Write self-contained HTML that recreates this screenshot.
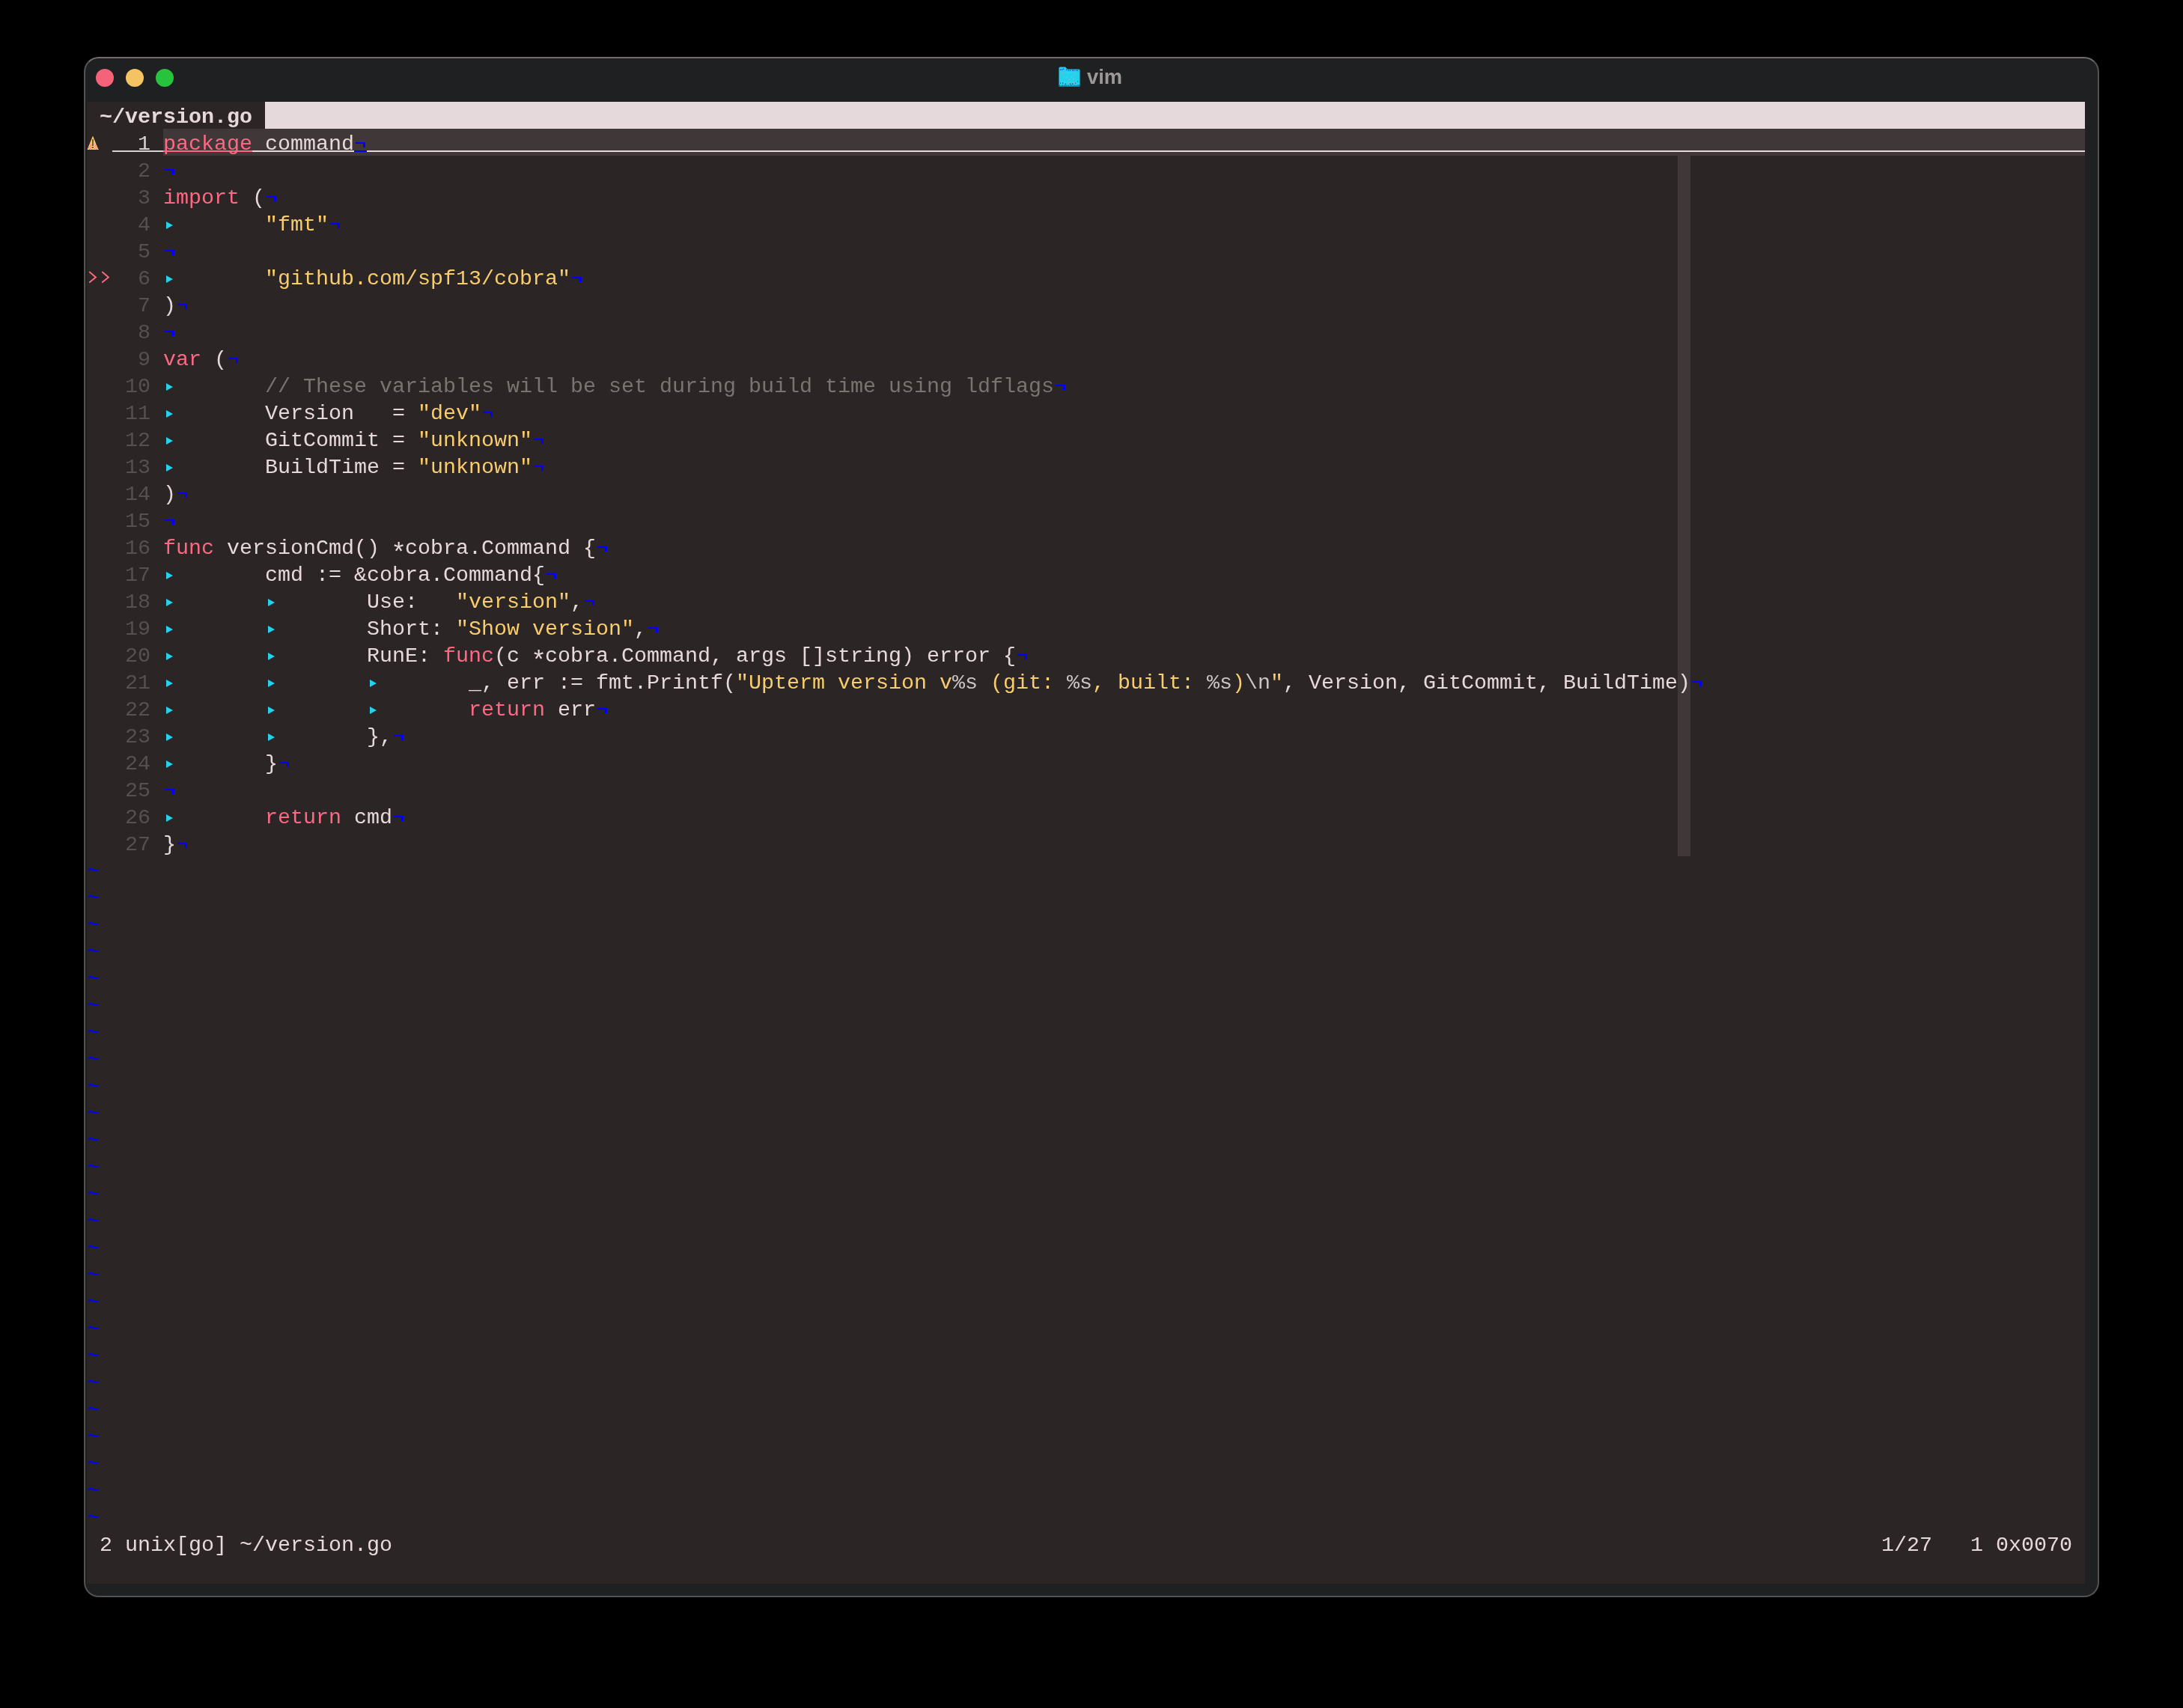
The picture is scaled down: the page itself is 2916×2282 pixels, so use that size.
<!DOCTYPE html>
<html><head><meta charset="utf-8"><title>vim</title><style>
html,body{margin:0;padding:0;background:#000;width:2916px;height:2282px;overflow:hidden;}
#win{position:absolute;left:112px;top:76px;width:2692px;height:2058px;box-sizing:border-box;border:2px solid #545351;border-top-color:#726c6a;border-radius:20px;background:#1f2022;}
.tl-btn{position:absolute;width:24px;height:24px;border-radius:50%;top:92px;}
#title{position:absolute;left:1452px;will-change:transform;top:88px;font-family:"Liberation Sans",sans-serif;font-weight:bold;font-size:27.3px;line-height:30px;color:#9d9898;}
#folder{position:absolute;left:1414px;top:88.5px;width:29px;height:27px;}
#term{position:absolute;left:116px;top:136px;width:2669px;height:1980px;background:#2c2525;font-family:"Liberation Mono",monospace;font-size:28.333px;line-height:36px;color:#e6d9db;overflow:hidden;will-change:transform;}
.r{position:absolute;left:0;height:36px;width:2669px;white-space:pre;}
.r b{font-weight:normal;}
.tlbg{position:absolute;height:36px;background:#e5d9db;}
.r b.tsel{color:#e6d9db;font-weight:bold;}
.cl{position:absolute;height:36px;background:#403838;}
.cc{position:absolute;width:17px;background:#403838;}
.ul{position:absolute;height:2px;}
.k{color:#fd6883;}
.s{color:#f9cc6c;}
.c{color:#7a7471;}
.x{color:#c9c5c3;}
.ln{color:#575050;}
.lnc{color:#d6d1d1;}
.nt{color:#0000ff;}
i{display:inline-block;width:17px;height:36px;vertical-align:top;position:relative;}
.nl::before{content:"";position:absolute;left:2px;top:15px;width:10px;height:5px;border-top:2px solid #0000ff;border-right:3px solid #0000ff;}
.tb::before{content:"";position:absolute;left:4px;top:13px;width:0;height:0;border-left:9px solid #22d3ee;border-top:5px solid transparent;border-bottom:5px solid transparent;}
.warn{width:34px;}
.sg{width:34px;}
.sg svg{position:absolute;left:0;top:-3px;}
.r b.st{display:inline-block;transform:translateY(8px) scale(1.22);}
.warn svg{position:absolute;left:-0.5px;top:6px;}
</style></head>
<body>
<div id="win"></div>
<div class="tl-btn" style="left:128px;background:#f5637a"></div>
<div class="tl-btn" style="left:168px;background:#f5c462"></div>
<div class="tl-btn" style="left:208px;background:#28c33d"></div>
<svg id="folder" viewBox="0 0 29 27"><path d="M0.5,2 Q0.5,0.5 2,0.5 L9,0.5 L12,3.5 L27,3.5 Q28.5,3.5 28.5,5 L28.5,26.5 L0.5,26.5 Z" fill="#22d3ee"/><rect x="1.9" y="3.5" width="1.2" height="1.2" fill="#1020d8"/><rect x="4.0" y="3.5" width="1.2" height="1.2" fill="#1020d8"/><rect x="6.0" y="2.5" width="1.2" height="1.2" fill="#1020d8"/><rect x="10.2" y="3.5" width="1.2" height="1.2" fill="#1020d8"/><rect x="12.9" y="4.5" width="1.2" height="1.2" fill="#1020d8"/><rect x="15.0" y="4.5" width="1.2" height="1.2" fill="#1020d8"/><rect x="18.1" y="4.5" width="1.2" height="1.2" fill="#1020d8"/><rect x="20.1" y="4.5" width="1.2" height="1.2" fill="#1020d8"/><rect x="23.2" y="4.5" width="1.2" height="1.2" fill="#1020d8"/><rect x="25.0" y="4.5" width="1.2" height="1.2" fill="#1020d8"/><rect x="25.0" y="19.3" width="1.2" height="1.2" fill="#1020d8"/><rect x="1.9" y="21.4" width="1.2" height="1.2" fill="#1020d8"/><rect x="5.0" y="21.4" width="1.2" height="1.2" fill="#1020d8"/><rect x="22.2" y="21.4" width="1.2" height="1.2" fill="#1020d8"/><rect x="8.8" y="22.4" width="1.2" height="1.2" fill="#1020d8"/><rect x="15.0" y="22.4" width="1.2" height="1.2" fill="#1020d8"/><rect x="18.1" y="22.4" width="1.2" height="1.2" fill="#1020d8"/><rect x="0.9" y="24.5" width="1.2" height="1.2" fill="#1020d8"/><rect x="3.0" y="24.5" width="1.2" height="1.2" fill="#1020d8"/><rect x="5.0" y="24.5" width="1.2" height="1.2" fill="#1020d8"/><rect x="7.1" y="24.5" width="1.2" height="1.2" fill="#1020d8"/><rect x="9.1" y="24.5" width="1.2" height="1.2" fill="#1020d8"/><rect x="10.9" y="24.5" width="1.2" height="1.2" fill="#1020d8"/><rect x="12.9" y="24.5" width="1.2" height="1.2" fill="#1020d8"/><rect x="15.0" y="24.5" width="1.2" height="1.2" fill="#1020d8"/><rect x="17.0" y="24.5" width="1.2" height="1.2" fill="#1020d8"/><rect x="19.1" y="24.5" width="1.2" height="1.2" fill="#1020d8"/><rect x="21.2" y="24.5" width="1.2" height="1.2" fill="#1020d8"/><rect x="23.2" y="24.5" width="1.2" height="1.2" fill="#1020d8"/><rect x="25.3" y="24.5" width="1.2" height="1.2" fill="#1020d8"/><rect x="27.0" y="24.5" width="1.2" height="1.2" fill="#1020d8"/><rect x="4.0" y="7.5" width="1.1" height="1.1" fill="#b8b0ae"/><rect x="6.7" y="7.5" width="1.1" height="1.1" fill="#b8b0ae"/><rect x="9.1" y="7.5" width="1.1" height="1.1" fill="#b8b0ae"/><rect x="10.9" y="7.5" width="1.1" height="1.1" fill="#b8b0ae"/><rect x="12.9" y="7.5" width="1.1" height="1.1" fill="#b8b0ae"/><rect x="15.0" y="7.5" width="1.1" height="1.1" fill="#b8b0ae"/><rect x="17.0" y="7.5" width="1.1" height="1.1" fill="#b8b0ae"/><rect x="19.1" y="7.5" width="1.1" height="1.1" fill="#b8b0ae"/><rect x="21.2" y="7.5" width="1.1" height="1.1" fill="#b8b0ae"/><rect x="22.9" y="8.4" width="1.1" height="1.1" fill="#b8b0ae"/><rect x="6.0" y="10.4" width="1.1" height="1.1" fill="#b8b0ae"/><rect x="20.1" y="11.4" width="1.1" height="1.1" fill="#b8b0ae"/><rect x="7.1" y="13.5" width="1.1" height="1.1" fill="#b8b0ae"/><rect x="10.9" y="13.5" width="1.1" height="1.1" fill="#b8b0ae"/><rect x="17.0" y="13.5" width="1.1" height="1.1" fill="#b8b0ae"/><rect x="19.1" y="15.5" width="1.1" height="1.1" fill="#b8b0ae"/><rect x="14.0" y="16.6" width="1.1" height="1.1" fill="#b8b0ae"/><rect x="3.0" y="20.7" width="1.1" height="1.1" fill="#b8b0ae"/><rect x="7.1" y="20.7" width="1.1" height="1.1" fill="#b8b0ae"/><rect x="8.8" y="20.7" width="1.1" height="1.1" fill="#b8b0ae"/><rect x="12.2" y="20.7" width="1.1" height="1.1" fill="#b8b0ae"/><rect x="15.0" y="20.7" width="1.1" height="1.1" fill="#b8b0ae"/><rect x="18.1" y="20.7" width="1.1" height="1.1" fill="#b8b0ae"/><rect x="20.1" y="20.7" width="1.1" height="1.1" fill="#b8b0ae"/><rect x="22.9" y="20.7" width="1.1" height="1.1" fill="#b8b0ae"/><rect x="3.0" y="23.4" width="1.1" height="1.1" fill="#b8b0ae"/><rect x="6.0" y="23.4" width="1.1" height="1.1" fill="#b8b0ae"/><rect x="11.2" y="23.4" width="1.1" height="1.1" fill="#b8b0ae"/><rect x="14.0" y="23.4" width="1.1" height="1.1" fill="#b8b0ae"/><rect x="20.1" y="23.4" width="1.1" height="1.1" fill="#b8b0ae"/><rect x="23.2" y="23.4" width="1.1" height="1.1" fill="#b8b0ae"/></svg>
<div id="title">vim</div>
<div id="term">
<div class="tlbg" style="top:0;left:238px;width:2431px"></div>
<div class="r" style="top:3px"><b class="tsel"> ~/version.go </b></div>
<div class="cl" style="top:36px;left:102px;width:2567px"></div>
<div class="cc" style="top:72px;left:2125px;height:936px"></div>
<div class="r" style="top:39px"><i class="warn"><svg width="16" height="20" viewBox="0 0 16 20"><polygon points="8,0.5 15.5,19 0.5,19" fill="#f9cc6c"/><rect x="4" y="11" width="1" height="1" fill="#fd6883"/><rect x="10" y="11" width="1" height="1" fill="#fd6883"/><rect x="6" y="12" width="1" height="1" fill="#fd6883"/><rect x="12" y="12" width="1" height="1" fill="#fd6883"/><rect x="5" y="13" width="1" height="1" fill="#fd6883"/><rect x="11" y="13" width="1" height="1" fill="#fd6883"/><rect x="4" y="14" width="1" height="1" fill="#fd6883"/><rect x="10" y="14" width="1" height="1" fill="#fd6883"/><rect x="13" y="14" width="1" height="1" fill="#fd6883"/><rect x="3" y="15" width="1" height="1" fill="#fd6883"/><rect x="6" y="15" width="1" height="1" fill="#fd6883"/><rect x="12" y="15" width="1" height="1" fill="#fd6883"/><rect x="2" y="16" width="1" height="1" fill="#fd6883"/><rect x="5" y="16" width="1" height="1" fill="#fd6883"/><rect x="11" y="16" width="1" height="1" fill="#fd6883"/><rect x="14" y="16" width="1" height="1" fill="#fd6883"/><rect x="4" y="17" width="1" height="1" fill="#fd6883"/><rect x="10" y="17" width="1" height="1" fill="#fd6883"/><rect x="13" y="17" width="1" height="1" fill="#fd6883"/><rect x="3" y="18" width="1" height="1" fill="#fd6883"/><rect x="6" y="18" width="1" height="1" fill="#fd6883"/><rect x="12" y="18" width="1" height="1" fill="#fd6883"/><rect x="15" y="18" width="1" height="1" fill="#fd6883"/><rect x="7" y="5" width="2" height="9" fill="#7a5a3a"/><rect x="7" y="15" width="2" height="2" fill="#7a5a3a"/></svg></i><b class="lnc">  1 </b><b class="k">package</b> command<i class="nl"></i></div>
<div class="r" style="top:75px">  <b class="ln">  2 </b><i class="nl"></i></div>
<div class="r" style="top:111px">  <b class="ln">  3 </b><b class="k">import</b> (<i class="nl"></i></div>
<div class="r" style="top:147px">  <b class="ln">  4 </b><i class="tb"></i>       <b class="s">&quot;fmt&quot;</b><i class="nl"></i></div>
<div class="r" style="top:183px">  <b class="ln">  5 </b><i class="nl"></i></div>
<div class="r" style="top:219px"><i class="sg"><svg width="34" height="36" viewBox="0 0 34 36"><path d="M3.8,11.6 L11.9,18.4 L3.8,25.1 M20.8,11.6 L28.9,18.4 L20.8,25.1" fill="none" stroke="#fd6883" stroke-width="1.9" stroke-linecap="round" stroke-linejoin="miter"/></svg></i><b class="ln">  6 </b><i class="tb"></i>       <b class="s">&quot;github.com/spf13/cobra&quot;</b><i class="nl"></i></div>
<div class="r" style="top:255px">  <b class="ln">  7 </b>)<i class="nl"></i></div>
<div class="r" style="top:291px">  <b class="ln">  8 </b><i class="nl"></i></div>
<div class="r" style="top:327px">  <b class="ln">  9 </b><b class="k">var</b> (<i class="nl"></i></div>
<div class="r" style="top:363px">  <b class="ln"> 10 </b><i class="tb"></i>       <b class="c">// These variables will be set during build time using ldflags</b><i class="nl"></i></div>
<div class="r" style="top:399px">  <b class="ln"> 11 </b><i class="tb"></i>       Version   = <b class="s">&quot;dev&quot;</b><i class="nl"></i></div>
<div class="r" style="top:435px">  <b class="ln"> 12 </b><i class="tb"></i>       GitCommit = <b class="s">&quot;unknown&quot;</b><i class="nl"></i></div>
<div class="r" style="top:471px">  <b class="ln"> 13 </b><i class="tb"></i>       BuildTime = <b class="s">&quot;unknown&quot;</b><i class="nl"></i></div>
<div class="r" style="top:507px">  <b class="ln"> 14 </b>)<i class="nl"></i></div>
<div class="r" style="top:543px">  <b class="ln"> 15 </b><i class="nl"></i></div>
<div class="r" style="top:579px">  <b class="ln"> 16 </b><b class="k">func</b> versionCmd() <b class="st">*</b>cobra.Command {<i class="nl"></i></div>
<div class="r" style="top:615px">  <b class="ln"> 17 </b><i class="tb"></i>       cmd := &amp;cobra.Command{<i class="nl"></i></div>
<div class="r" style="top:651px">  <b class="ln"> 18 </b><i class="tb"></i>       <i class="tb"></i>       Use:   <b class="s">&quot;version&quot;</b>,<i class="nl"></i></div>
<div class="r" style="top:687px">  <b class="ln"> 19 </b><i class="tb"></i>       <i class="tb"></i>       Short: <b class="s">&quot;Show version&quot;</b>,<i class="nl"></i></div>
<div class="r" style="top:723px">  <b class="ln"> 20 </b><i class="tb"></i>       <i class="tb"></i>       RunE: <b class="k">func</b>(c <b class="st">*</b>cobra.Command, args []string) error {<i class="nl"></i></div>
<div class="r" style="top:759px">  <b class="ln"> 21 </b><i class="tb"></i>       <i class="tb"></i>       <i class="tb"></i>       _, err := fmt.Printf(<b class="s">&quot;Upterm version v</b><b class="x">%s</b><b class="s"> (git: </b><b class="x">%s</b><b class="s">, built: </b><b class="x">%s</b><b class="s">)</b><b class="x">\n</b><b class="s">&quot;</b>, Version, GitCommit, BuildTime)<i class="nl"></i></div>
<div class="r" style="top:795px">  <b class="ln"> 22 </b><i class="tb"></i>       <i class="tb"></i>       <i class="tb"></i>       <b class="k">return</b> err<i class="nl"></i></div>
<div class="r" style="top:831px">  <b class="ln"> 23 </b><i class="tb"></i>       <i class="tb"></i>       },<i class="nl"></i></div>
<div class="r" style="top:867px">  <b class="ln"> 24 </b><i class="tb"></i>       }<i class="nl"></i></div>
<div class="r" style="top:903px">  <b class="ln"> 25 </b><i class="nl"></i></div>
<div class="r" style="top:939px">  <b class="ln"> 26 </b><i class="tb"></i>       <b class="k">return</b> cmd<i class="nl"></i></div>
<div class="r" style="top:975px">  <b class="ln"> 27 </b>}<i class="nl"></i></div>
<div class="ul" style="top:65px;left:34px;width:68px;background:#d6d1d1"></div>
<div class="ul" style="top:65px;left:102px;width:119px;background:#fd6883"></div>
<div class="ul" style="top:65px;left:221px;width:136px;background:#e6d9db"></div>
<div class="ul" style="top:65px;left:357px;width:17px;background:#0000ff"></div>
<div class="ul" style="top:65px;left:374px;width:2295px;background:#e6d9db"></div>
<div class="r" style="top:1011px"><b class="nt">~</b></div>
<div class="r" style="top:1047px"><b class="nt">~</b></div>
<div class="r" style="top:1083px"><b class="nt">~</b></div>
<div class="r" style="top:1119px"><b class="nt">~</b></div>
<div class="r" style="top:1155px"><b class="nt">~</b></div>
<div class="r" style="top:1191px"><b class="nt">~</b></div>
<div class="r" style="top:1227px"><b class="nt">~</b></div>
<div class="r" style="top:1263px"><b class="nt">~</b></div>
<div class="r" style="top:1299px"><b class="nt">~</b></div>
<div class="r" style="top:1335px"><b class="nt">~</b></div>
<div class="r" style="top:1371px"><b class="nt">~</b></div>
<div class="r" style="top:1407px"><b class="nt">~</b></div>
<div class="r" style="top:1443px"><b class="nt">~</b></div>
<div class="r" style="top:1479px"><b class="nt">~</b></div>
<div class="r" style="top:1515px"><b class="nt">~</b></div>
<div class="r" style="top:1551px"><b class="nt">~</b></div>
<div class="r" style="top:1587px"><b class="nt">~</b></div>
<div class="r" style="top:1623px"><b class="nt">~</b></div>
<div class="r" style="top:1659px"><b class="nt">~</b></div>
<div class="r" style="top:1695px"><b class="nt">~</b></div>
<div class="r" style="top:1731px"><b class="nt">~</b></div>
<div class="r" style="top:1767px"><b class="nt">~</b></div>
<div class="r" style="top:1803px"><b class="nt">~</b></div>
<div class="r" style="top:1839px"><b class="nt">~</b></div>
<div class="r" style="top:1875px"><b class="nt">~</b></div>
<div class="r" style="top:1911px"> 2 unix[go] ~/version.go                                                                                                                     1/27   1 0x0070</div>
</div>
</body></html>
